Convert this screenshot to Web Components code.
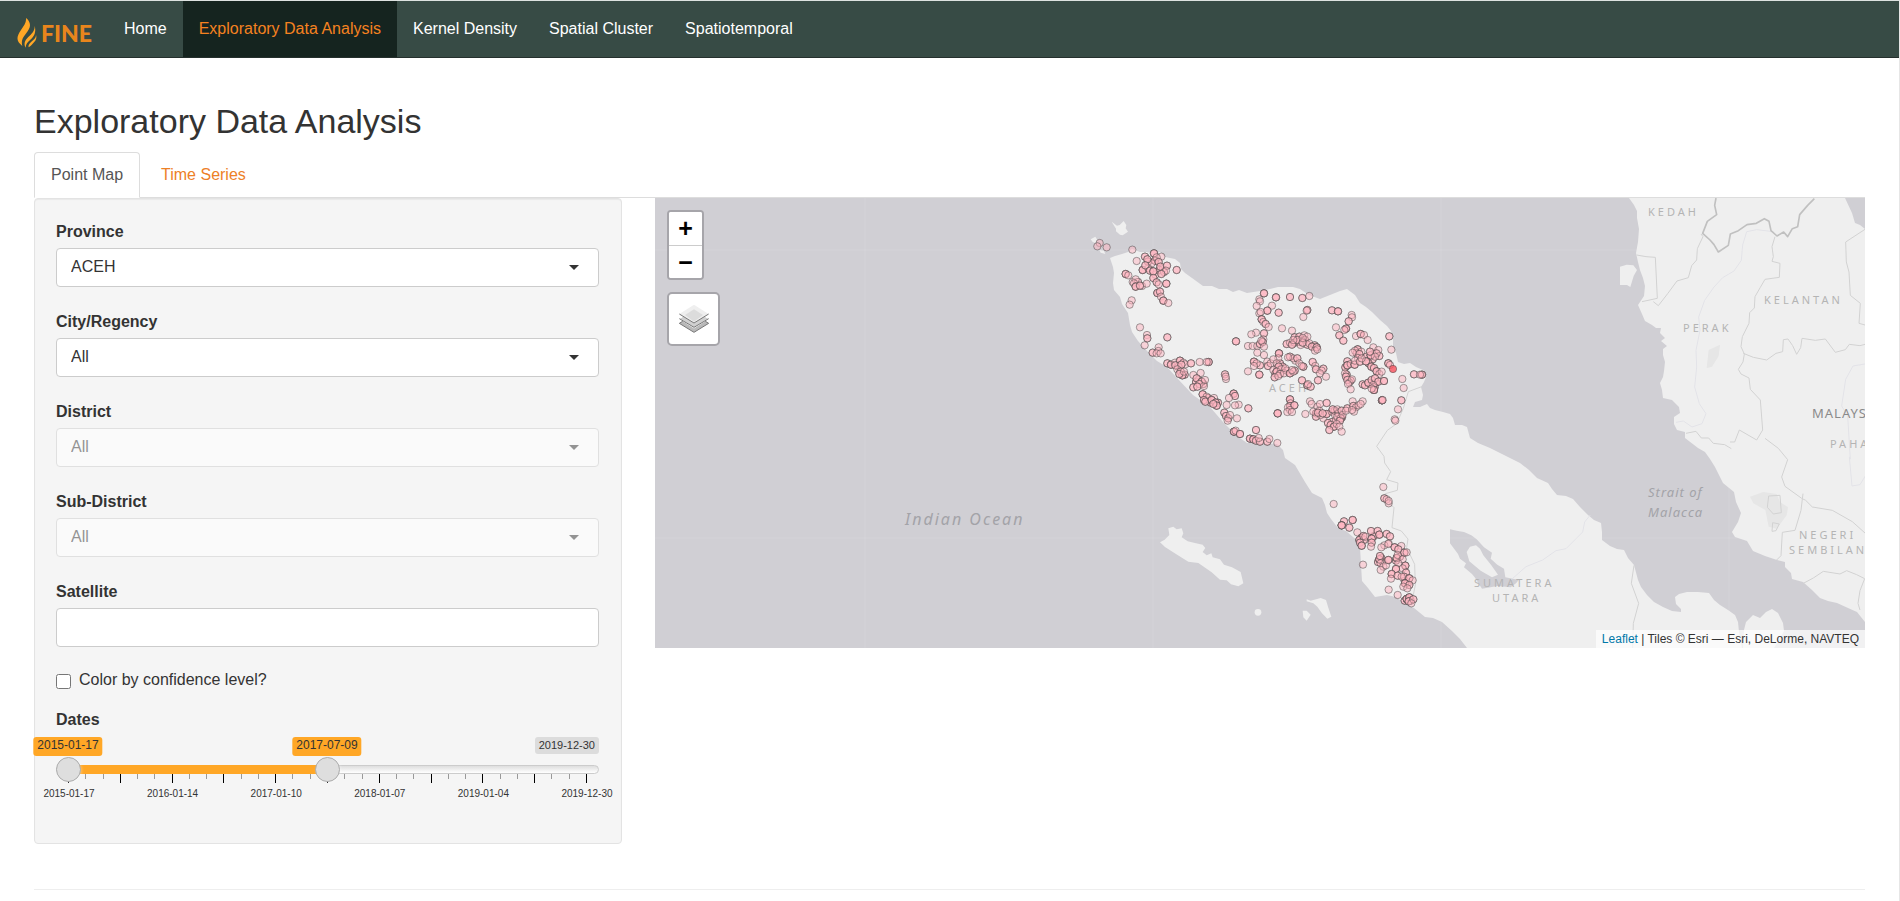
<!DOCTYPE html>
<html lang="en">
<head>
<meta charset="utf-8">
<title>FINE – Exploratory Data Analysis</title>
<style>
  body {
    margin: 0;
    background: #fff;
    color: #333;
    font: 16px/23px "Liberation Sans", Arial, sans-serif;
    border-right: 1px solid #e6e6e6;
    border-top: 1px solid #dde2e0;
    box-sizing: border-box;
    overflow-x: hidden;
  }
</style>
</head>
<body>
<fine-app></fine-app>

<script>
const attach = (el, html) => {
  el.attachShadow({ mode: 'open' }).innerHTML = html;
  return el.shadowRoot;
};

/* Logo: flame and word mark */
customElements.define('fine-logo', class extends HTMLElement {
  connectedCallback() {
    attach(this, `
      <style>
        :host { display: block; }
        a { display: flex; align-items: center; gap: 4px; color: #e8851c; text-decoration: none;
            font: 900 23px/30px Lato, sans-serif; }
        svg { display: block; }
      </style>
      <a href="#home"><svg width="20" height="30" viewBox="0 0 60 90" aria-hidden="true">
        <path fill="#ffa726" d="M27 0C29 14 20 24 12 36C3 49-1 59 3 69C6 77 14 81 16 84C12 70 16 60 26 48C37 34 42 24 37 13C35 7 31 3 27 0Z"/>
        <path fill="#ffa726" d="M53 23C54 36 47 44 38 53C26 64 18 74 26 89C26 78 32 72 40 65C52 55 58 42 53 23Z"/>
        <path fill="#ffa726" d="M57 50C57 60 50 65 43 71C36 77 33 83 35 88C44 83 46 78 51 73C57 66 60 59 57 50Z"/>
      </svg><span>FINE</span></a>`);
  }
});

customElements.define('fine-navbar', class extends HTMLElement {
  connectedCallback() {
    const items = ['Home', 'Exploratory Data Analysis', 'Kernel Density', 'Spatial Cluster', 'Spatiotemporal'];
    attach(this, `
      <style>
        :host { display: block; background: #374b45; border-bottom: 1px solid #25302d; }
        nav { display: flex; align-items: stretch; min-height: 56px; }
        fine-logo { flex: none; box-sizing: border-box; width: 108px; padding: 17px 0 9px 17px; }
        ul { display: flex; margin: 0; padding: 0; list-style: none; }
        a { display: block; padding: 16px 16px 17px; color: #fff; text-decoration: none; }
        a[aria-current] { background: #15241f; color: #f58220; }
      </style>
      <nav><fine-logo></fine-logo><ul>${items.map((t, i) =>
        `<li><a href="#"${i === 1 ? ' aria-current="page"' : ''}>${t}</a></li>`).join('')}</ul></nav>`);
  }
});

customElements.define('fine-tabs', class extends HTMLElement {
  connectedCallback() {
    attach(this, `
      <style>
        :host { display: block; border-bottom: 1px solid #ddd; }
        div { display: flex; gap: 4px; margin-bottom: -1px; }
        button { font: inherit; color: #ed8027; background: none; border: 1px solid transparent;
                 border-radius: 4px 4px 0 0; padding: 10px 16px 11px; margin: 0; cursor: pointer; }
        button[aria-selected=true] { color: #555; background: #fff; border-color: #ddd #ddd #fff; }
      </style>
      <div role="tablist">
        <button role="tab" aria-selected="true">Point Map</button>
        <button role="tab" aria-selected="false">Time Series</button>
      </div>`);
  }
});

/* Labelled drop-down: <select-field label="" value="" [disabled]> */
customElements.define('select-field', class extends HTMLElement {
  connectedCallback() {
    const off = this.hasAttribute('disabled');
    attach(this, `
      <style>
        :host { display: block; }
        label { display: block; font-weight: 700; margin-bottom: 5px; }
        .box { position: relative; }
        :host([disabled]) .box { opacity: .5; }
        select { appearance: none; display: block; width: 100%; height: 39px; box-sizing: border-box; margin: 0;
                 font: inherit; color: #333; opacity: 1; background: #fff; border: 1px solid #ccc; border-radius: 4px;
                 padding: 0 14px 2px; }
        .box::after { content: ""; position: absolute; right: 20px; top: 17px; pointer-events: none;
                 border: 5px solid transparent; border-top-color: #333; border-bottom: 0; }
      </style>
      <label for="s">${this.getAttribute('label')}</label>
      <div class="box"><select id="s"${off ? ' disabled' : ''}><option>${this.getAttribute('value')}</option></select></div>`);
  }
});

customElements.define('text-field', class extends HTMLElement {
  connectedCallback() {
    attach(this, `
      <style>
        :host { display: block; }
        label { display: block; font-weight: 700; margin-bottom: 5px; }
        input { display: block; width: 100%; height: 39px; box-sizing: border-box; margin: 0; font: inherit;
                color: #333; background: #fff; border: 1px solid #ccc; border-radius: 4px; padding: 0 14px; }
      </style>
      <label for="t">${this.getAttribute('label')}</label><input id="t" type="text">`);
  }
});

customElements.define('check-field', class extends HTMLElement {
  connectedCallback() {
    attach(this, `
      <style>
        :host { display: block; }
        label { display: flex; gap: 8px; align-items: flex-start; }
        input { width: 15px; height: 15px; margin: 6px 0 0; }
      </style>
      <label><input type="checkbox"><slot></slot></label>`);
  }
});

/* Two-handled date range */
customElements.define('date-range', class extends HTMLElement {
  connectedCallback() {
    const ticks = Array.from({ length: 31 }, (_, i) => `<i${i % 3 ? '' : ' class="big"'}></i>`).join('');
    const dates = ['2015-01-17', '2016-01-14', '2017-01-10', '2018-01-07', '2019-01-04', '2019-12-30'];
    attach(this, `
      <style>
        :host { display: block; }
        .label { font-weight: 700; margin-bottom: 6px; }
        .values { position: relative; display: flex; justify-content: flex-end; height: 28px; line-height: 17px; }
        .values span { font-size: 11px; height: 17px; padding: 0 4px; background: #dcdcdc; border-radius: 3px; }
        .values output { position: absolute; top: 0; left: calc(12px + (100% - 25px) * var(--p)); transform: translateX(-50%);
              font-size: 12px; line-height: 15px; padding: 1px 4px 3px; background: #ffa726; border-radius: 3px; white-space: nowrap; }
        .rail { position: relative; height: 9px; box-sizing: border-box; border: 1px solid #ccc; border-radius: 8px;
              background: linear-gradient(#dedede, #fff); }
        .rail::before { content: ""; position: absolute; top: -1px; bottom: -1px; left: 12px; width: calc((100% - 25px) / 2);
              background: #ffa726; }
        input { appearance: none; position: absolute; left: -1px; top: -10px; width: calc(100% + 2px); height: 27px;
              margin: 0; background: none; pointer-events: none; }
        input::-webkit-slider-thumb { appearance: none; box-sizing: border-box; width: 25px; height: 25px;
              border: 1px solid #ababab; border-radius: 50%; background: #dedede;
              box-shadow: 1px 1px 3px rgba(255,255,255,.3); pointer-events: auto; }
        .ticks { display: flex; justify-content: space-between; padding: 0 12px; height: 13px; }
        .ticks i { width: 1px; height: 5px; background: #999; }
        .ticks .big { height: 9px; background: #000; }
        .dates { display: flex; justify-content: space-between; padding: 0 12px 0 13px; font-size: 10px; line-height: 14px; }
        .dates span { display: flex; justify-content: center; width: 0; white-space: nowrap; }
      </style>
      <div class="label">Dates</div>
      <div class="values"><span>2019-12-30</span>
        <output style="--p:0">2015-01-17</output><output style="--p:.5">2017-07-09</output></div>
      <div class="rail">
        <input type="range" aria-label="Start date" min="0" max="1808" value="0">
        <input type="range" aria-label="End date" min="0" max="1808" value="904">
      </div>
      <div class="ticks">${ticks}</div>
      <div class="dates">${dates.map(d => `<span>${d}</span>`).join('')}</div>`);
  }
});

customElements.define('filter-panel', class extends HTMLElement {
  connectedCallback() {
    attach(this, `
      <style>
        :host { display: flex; flex-direction: column; gap: 23px; box-sizing: border-box; padding: 21px 22px 42px 21px;
                background: #f5f5f5; border: 1px solid #e3e3e3; border-radius: 4px;
                box-shadow: inset 0 1px 1px rgba(0,0,0,.05); }
        .more { display: flex; flex-direction: column; gap: 17px; margin-top: -2px; }
      </style>
      <select-field label="Province" value="ACEH"></select-field>
      <select-field label="City/Regency" value="All"></select-field>
      <select-field label="District" value="All" disabled></select-field>
      <select-field label="Sub-District" value="All" disabled></select-field>
      <text-field label="Satellite"></text-field>
      <div class="more">
        <check-field>Color by confidence level?</check-field>
        <date-range></date-range>
      </div>`);
  }
});

/* Fire hotspots as x,y[,detections]; three units to the pixel, grouped by survey area */
const HOTSPOTS = [
  [1060, 200, `119,129 112,139 140,142 217,149 230,183 282,160,3 255,170,2 304,170 264,185,3 285,182,3 275,190 248,210,3 265,205
   262,178,2 290,172 296,186,2 256,196,2 270,212,2 298,210,2 308,208 312,216,2 286,224 218,246 234,246,2 246,258
   280,214,3 301,200,2 321,197,2 318,212 304,222,2 350,210,2 197,222,3 205,226 227,238 222,250 227,260,3 240,257,2 260,251 280,234,2
   290,247,2 296,253 319,251,3 292,279,3 300,275,2 303,290 310,302,3 325,309 215,301 209,314 240,382 261,405 262,415,2 322,412,2
   254,436 278,458,2 296,442 295,453 290,460 302,460 322,490,2 333,494,3 345,488 360,482,3 370,488 355,500,2 376,493 393,490,2
   346,496,2 364,494,2 352,508 374,524,2 408,546,2 430,552,2 416,540 444,594,2 452,608,2 462,594 474,608,2
   419,486 446,486,3 440,486 362,515,2 367,526,3 358,522,2 372,515 400,525 422,519 410,535,2 425,545,3 418,552,2 400,562,2
   412,560,2 432,558 435,540 428,583,3 440,590 432,600,2 436,605,2 455,600,3 467,608,3 470,617,3 460,612,2 495,523,2 498,537
   497,530 521,581,4 525,588,2 507,594 500,615 536,614 525,616 565,625,2 493,638,2 498,648,2 505,655,2 510,645 531,655 503,662
   522,695,4 527,692 540,702,3 588,690,2 570,716,3 580,718,3 588,722,2 600,725,2 596,714 622,725,2 628,717 652,729
   612,280,3 648,292,3 690,291,2 727,294,2 748,288 598,298 600,304 590,318 636,317 622,332,3 656,338,2 598,340 602,336 742,330,2
   740,332 730,351 816,331,2 834,334,3 875,345 876,352 866,364,2 858,386,3 853,390 828,382 838,406,2 850,422,2 605,358,3 610,366
   617,372,2 626,381 666,385 696,392 612,400,2 588,398 574,403 610,418 528,424,3 564,438 578,438 592,438 600,432,2 608,426,2
   612,440 604,422 592,458 612,465 680,432,2 690,428 704,412,2 704,428,3 718,410,2 718,425,2 733,406 735,420,2 722,435 742,434,2
   712,420,2 728,428,2 696,434,2 748,430 764,436,2 660,490,2 668,500,2 652,504 680,512,2 646,520,2 706,482 704,512,2
   756,440,2 770,442,3 765,452 772,448 700,420 742,410 728,414 657,460,4 655,475 582,485,3 600,496,2 590,490 582,498 598,524,3
   564,514 622,485 624,498,2 632,490 640,478 650,490 656,500,2 640,510 650,515,3 664,508 660,522,2 644,532,2 655,528 672,520
   676,505 690,520,3 700,515 696,510 690,470,2 700,475 712,475,2 684,472 718,490 730,500,3 725,498 758,486,2 766,498 768,508,2
   790,506,2 785,512 780,520 798,530 774,541,2 726,541,2 742,556,3 752,560,2 744,552 893,448,3 890,460,2 885,452 904,455
   898,462,2 878,458 920,470,2 938,478,2 926,490,2 948,460,2 894,474 856,502,2 860,524,2 872,542,2 930,552,2 948,548,2 944,562,2
   888,408 902,402,3 912,405 923,420 940,442 955,450 958,468,2 950,460 932,466,4 930,455,2 945,470 988,409,2 994,449 985,490,3
   990,495 862,484,2 862,496,4 872,492 884,494,3 885,482 900,485,2 918,484,3 905,475 934,500,3 942,504,2 950,514,3
   958,522 965,515 855,520 858,530,2 862,540,2 868,548 876,538 864,552 872,568 908,553,2 915,556,2 925,548,3 935,540,2 945,535,2
   955,545,2 972,543,3 940,555 942,570,5 935,566 966,601,5 968,600 1062,523,2 1086,524,3 1080,524 1027,537 1031,564 1024,601,2
   1014,628 1004,658 1006,662 653,640,4 690,598,3 692,610 690,618,2 703,616,3 684,622 690,630 682,636 696,636 750,604 755,612
   736,642 772,620 780,612 800,609,2 768,640,3 768,650,2 760,635 778,632 790,655 782,645 800,642,3 815,635 824,632,3 825,645
   774,638,2 788,640,2 818,628,2 836,640,2 816,666,2 828,660 846,652,2
   832,628 845,632,2 842,655,4 832,650 840,662,2 848,645 862,625,2 858,632 878,604 880,618,2 888,622 896,616 908,604 902,612
   882,635 876,630 804,669,2 812,675,2 822,680,3 830,672 838,680 808,690,2 845,695`],
  [1120, 400, `641,312 790,261 793,295,2 800,298 806,310 806,303 698,360,3 672,364,2 665,376,5 688,383,2 712,397 724,414,4 718,420,3
   732,420,2 720,428,2 730,408,2 762,408,2 784,474,2 788,484 774,486,2 840,470,2 828,482,2 854,542,2 864,548,2 854,602,2 872,602,2
   725,437,3 736,410 753,393,2 773,393,2 778,404,3 755,416,3 755,428,2 753,440 800,402,2 810,409,2 806,430 793,436 784,442
   805,432 824,442,3 844,438 835,448,2 853,458,3 860,457 778,478,5 780,468,2 782,490 790,500 782,510 798,496 805,480,3
   830,474,4 833,465 848,478 835,490 856,497,3 848,505 828,507,3 815,522,3 813,536 833,527,2 858,518,2 852,530,2 868,535,3
   845,530 878,541 855,550,3 868,555,2 850,560 862,565 729,494 806,569 833,585 860,597,5 868,592,3 866,604,3 880,598,2 874,610`]
];
const dots = HOTSPOTS.map(([x, y, list]) =>
  `<g transform="translate(${x} ${y}) scale(.33333)">` + list.trim().split(/\s+/).map(d => {
    const [cx, cy, n = 1] = d.split(',').map(Number);
    return `<circle cx="${cx}" cy="${cy}" r="11"/>`.repeat(n);
  }).join('') + '</g>').join('');

customElements.define('hotspot-map', class extends HTMLElement {
  connectedCallback() {
    attach(this, `
      <style>
        :host { display: block; position: relative; height: 450px; overflow: hidden; background: #d0cfd4; }
        .canvas { display: block; width: 100%; height: 100%; }
        .controls { position: absolute; top: 12px; left: 12px; display: grid; gap: 12px; justify-items: start; }
        .bar { border: 2px solid #a6a5aa; border-radius: 4px; overflow: hidden; background: #fff; }
        .bar button { display: block; width: 33px; height: 33px; box-sizing: border-box; margin: 0; padding: 0;
                      border: 0; background: #fff; color: #000; font: bold 25px/33px "Liberation Sans", sans-serif; }
        .bar button + button { border-top: 1px solid #ccc; }
        .layers { display: grid; place-items: center; width: 53px; height: 54px; padding: 0; border: 2px solid #a6a5aa;
                  border-radius: 5px; background: #fff; }
        .credit { position: absolute; right: 0; bottom: 0; padding: 0 6px; font-size: 12px; line-height: 18px;
                  background: rgba(255,255,255,.7); }
        .credit a { color: #0078a8; text-decoration: none; }
        .land { fill: #efefef; }
        .sea { fill: #d0cfd4; }
        .urban { fill: #e6e6e6; }
        .line, .nation, .river { fill: none; stroke: #d2d2d2; stroke-width: 3; stroke-linejoin: round; }
        .nation { stroke: #c0c0c0; stroke-width: 5; }
        .river { stroke: #e3e3e8; }
        text { font-family: "Noto Sans", sans-serif; font-size: 11px; letter-spacing: 3px; fill: #b4b4b4; }
        .country { font-size: 13px; letter-spacing: 1px; fill: #8a8a8a; }
        .water { font-size: 13px; letter-spacing: 1px; font-style: italic; fill: #a3a3a8; }
        .ocean { font-size: 16px; letter-spacing: 2px; }
        .dots circle { fill: #ffb6c1; fill-opacity: .5; stroke: #444; stroke-opacity: .5; stroke-width: 3; }
        .dots .hot { fill: #f8505c; fill-opacity: .8; }
      </style>
      <svg class="canvas" viewBox="655 198 1210 450" preserveAspectRatio="xMidYMid slice" role="img" aria-label="Map of fire hotspots in Aceh">
        <path class="land" d="M1110 258L1115 256 1122 254 1128 252 1132 249 1140 252 1147 252 1153 254 1160 252 1165 257 1170 258 1175 259 1180 263 1181 269 1185 273 1192 278 1203 286 1212 286 1219 289 1227 289 1233 292 1239 290 1247 293 1260 291 1270 289 1278 287 1285 287 1293 287 1300 289 1309 295 1320 299 1330 295 1340 291 1347 289 1355 295 1360 303 1366 307 1372 312 1380 320 1387 326 1391 331 1393 337 1393 347 1396 353 1398 362 1404 364 1410 363 1416 367 1423 370 1426 377 1424 382 1421 387 1423 395 1422 400 1415 402 1413 407 1420 407 1427 404 1430 408 1435 410 1443 412 1450 414 1453 418 1455 425 1462 425 1467 427 1470 438 1478 443 1490 448 1500 453 1510 458 1520 463 1529 470 1537 478 1548 483 1552 489 1557 495 1566 496 1573 499 1580 507 1588 515 1594 520 1601 523 1602 532 1602 540 1610 546 1617 549 1624 550 1628 558 1634 565 1638 580 1641 587 1647 595 1654 602 1663 607 1672 611 1681 612 1681 609 1676 604 1675 597 1679 594 1687 592 1698 592 1709 593 1714 600 1720 605 1728 610 1735 615 1738 622 1739 632 1742 648 1467 648 1460 639 1452 631 1442 622 1433 618 1425 617 1414 608 1403 602 1396 597 1387 595 1381 596 1375 597 1368 588 1362 581 1361 565 1360 547 1357 540 1353 537 1346 531 1338 528 1331 519 1327 513 1325 505 1322 498 1312 493 1305 482 1295 465 1285 458 1283 450 1277 444 1260 443 1247 443 1237 436 1223 422 1210 407 1193 395 1177 378 1167 367 1157 361 1148 352 1138 341 1132 332 1130 325 1128 313 1122 304 1120 297 1114 290 1113 283 1114 273 1113 267Z"/>
        <path class="land" d="M1743 648L1744 630 1746 622 1753 615 1760 618 1766 612 1772 609 1778 613 1783 623 1784 631 1780 638 1774 648Z"/>
        <path class="land" d="M1629 198L1634 205 1637 211 1637 218 1639 229 1638 242 1636 253 1638 262 1640 270 1643 278 1645 286 1644 296 1638 305 1642 314 1645 321 1652 325 1656 328 1661 328 1660 333 1665 338 1661 341 1667 346 1663 349 1663 355 1665 362 1664 371 1663 377 1660 383 1662 390 1663 398 1672 400 1679 407 1680 413 1674 417 1674 424 1677 430 1685 432 1685 438 1698 448 1705 452 1710 459 1715 467 1723 483 1734 492 1736 502 1741 513 1738 522 1732 532 1735 537 1747 541 1753 551 1765 556 1777 560 1785 562 1785 567 1791 573 1792 579 1803 582 1812 590 1820 598 1828 601 1837 603 1848 608 1857 612 1865 622V229L1860 225 1855 223 1852 213 1845 198Z"/>
        <g transform="translate(1120 400) scale(.33333)" class="land">
          <path d="M145 385l15-5 10 8 15-3 5 15-5 12 18 12 25 6 20 4 8 10-8 12 12 10 14-6 4 12 22 6 12 16 24 8 26 14 8 34-15 9-22-6-13-12-20-2-25-22-40-28-30-4-36-22-34-22-15-14 14-8 14-14z"/>
          <circle cx="414" cy="637" r="10"/>
          <path d="M560 598l12 4 30-8 16 6 6 20 10 30-12 6-16-16-14-20-12-10-20-6zM548 632l12 0 12 12-12 18-10-10z"/>
        </g>
        <g transform="translate(1060 200) scale(.33333)" class="land">
          <path d="M155 65l16 12 8-2 12-12 8 12-2 10 7 10-16 11-8-2-12-10 0-8zM92 118l14-8 6 10-4 10-10-4zM118 150l14 2 4 10-14-4z"/>
        </g>
        <g transform="translate(1420 190) scale(.33333)">
          <path class="land" d="M600 230l20-6 20 2 11 14-10 18-10 33-10-6-21 0z"/>
          <path class="urban" d="M866 480l34-16-4 34-20 32-16 4z"/>
          <path class="river" d="M1060 125l-50-6-30 6-12 40-4 46-22 32-34 20-26 28-28 40-18 50 4 40-12 60 2 50-6 60 14 50 20 30-12 30-30 10-26-18-22 4M1335 522l-36 6-22 40-12 80 18 30 8 130M1288 800l8 88 24-4 16-26"/>
          <path class="line" d="M650 195l28 5 28 2 6 123-46 10M700 335l15 12 28-36 28-38 34-10 10-36 15-17 2-34 17-36-6-8M1065 140l-9 30 4 30-4 14 24 6-2 42-43 6-14 24-16 28-2 34-14 14-2 32-20 40-4 30 10 22-4 24-14 22 8 14 24 12 4 34 30 32 7 90-18 30-52-30-14 36-14 0M970 490l30 12 40 8 28-20 20-5 2-36 14-2 14 20 12 26 12-20 4-28 40 6 30-4 30 40 30-8 12-16 32 4 15-4M1335 118l-58 38 2 60 8 30 4 70 30 24-4 60 18 5M1035 745l40 30 28 34-18 52 10 28 50 36 12 6 20 20 60 10 60 34 38 34M1149 911l-6 50-18 60-38 6-4 70-14 14M1150 1180l30-16 30-20 50 8 20-10 30 12 24 12-14 36-6 38 6 20"/>
          <path class="line" d="M798 730l30-6 16 20 22 0 14 16 34 4 20 12"/>
          <path class="nation" d="M888 24l-4 22 6 28-28 20-14 36 22 20 12 14 13 22 30-20 6-34 24-10 26-18 28-4 24-14 14 8 6 28 18 16 20-12 12 14 14-24 16-6 6-36 24-28 20-20"/>
          <path class="urban" d="M990 920l40-14 40 6 10 24 24 16-4 24-30 40-24-6-10-50-36-20z"/>
          <path class="line" d="M1046 918l34-2 4 52-24 4-18-20zM1058 998l20 4-10 20-12 2z"/>
        </g>
        <g transform="translate(1420 440) scale(.33333)">
          <path class="sea" d="M90 268l20 4 22 4 22 10 16 12 22 24 24 16-4 18 20 18 20 12 4 26 30 6 12 0-10 12-16 12-40-4-46 8-22-34-8-10-24-20 6-12-18-14-6-14-24-32z"/>
          <path class="land" d="M150 320l18-4 12 10 10 20 24 30 20 28-18 8-34-20-34-28-8-28z"/>
          <path class="river" d="M510 226l-16 20-6 30-50 50-30 6-40 28-50 20-50 44"/>
          <path class="line" d="M642 376l-8 54 22 60-16 60-2 74"/>
        </g>
        <g transform="translate(1120 400) scale(.33333)">
          <path class="line" d="M905-40l-40 15-15 50-20 46-28 20-32 48 22 30 2 20 18 26-12 24 34 10-2 22-36 10 14 30 12 12-6 60 28 10 20 24-4 26 24 50 2 62-8 40"/>
        </g>
        <path d="M865 198V648M1153 198V648M1441 198V648M1729 198V648M655 250H1865M655 538H1865" stroke="#fff" stroke-opacity=".1" fill="none"/>
        <text x="1648" y="216">KEDAH</text>
        <text x="1764" y="304">KELANTAN</text>
        <text x="1683" y="332">PERAK</text>
        <text x="1269" y="392">ACEH</text>
        <text x="1830" y="448">PAHANG</text>
        <text x="1799" y="539">NEGERI</text>
        <text x="1789" y="554">SEMBILAN</text>
        <text x="1474" y="587">SUMATERA</text>
        <text x="1492" y="602">UTARA</text>
        <text class="country" x="1812" y="418">MALAYSIA</text>
        <text class="water" x="1648" y="497">Strait of</text>
        <text class="water" x="1648" y="517">Malacca</text>
        <text class="water ocean" x="905" y="525">Indian Ocean</text>
        <g class="dots">${dots}<g transform="translate(1060 200) scale(.33333)"><circle class="hot" cx="999" cy="507" r="11"/></g></g>
      </svg>
      <div class="controls">
        <div class="bar"><button aria-label="Zoom in">+</button><button aria-label="Zoom out">−</button></div>
        <button class="layers" aria-label="Layers"><svg width="30" height="30" viewBox="0 0 90 90" aria-hidden="true">
          <path fill="#b9b9b9" stroke="#777" stroke-width="3" d="M1 58L45 85 89 58 45 31Z"/>
          <path fill="#d0d0d0" stroke="#fff" stroke-width="3" d="M1 44L45 72 89 44 45 17Z"/>
          <path fill="none" stroke="#777" stroke-width="3" d="M1 44L45 70 89 44"/>
          <path fill="#efefef" d="M1 30L45 2 89 30 45 58Z"/>
          <path fill="#dcdcdc" d="M18 33L45 16 72 33 45 53Z"/>
          <path fill="none" stroke="#777" stroke-width="3" d="M1 30L45 57 89 30"/>
        </svg></button>
      </div>
      <div class="credit"><a href="#leaflet">Leaflet</a> | Tiles © Esri — Esri, DeLorme, NAVTEQ</div>`);
  }
});

customElements.define('fine-app', class extends HTMLElement {
  connectedCallback() {
    attach(this, `
      <style>
        :host { display: block; }
        main { padding: 45px 34px 0; }
        h2 { margin: 0 0 12px; font-size: 34px; line-height: 37px; font-weight: 400; }
        .row { display: grid; grid-template-columns: 588fr 1210fr; gap: 33px; align-items: start; }
        hr { border: 0; border-top: 1px solid #eee; margin: 45px 0 11px; }
      </style>
      <fine-navbar></fine-navbar>
      <main>
        <h2>Exploratory Data Analysis</h2>
        <fine-tabs></fine-tabs>
        <div class="row"><filter-panel></filter-panel><hotspot-map></hotspot-map></div>
        <hr>
      </main>`);
  }
});
</script>
</body>
</html>
